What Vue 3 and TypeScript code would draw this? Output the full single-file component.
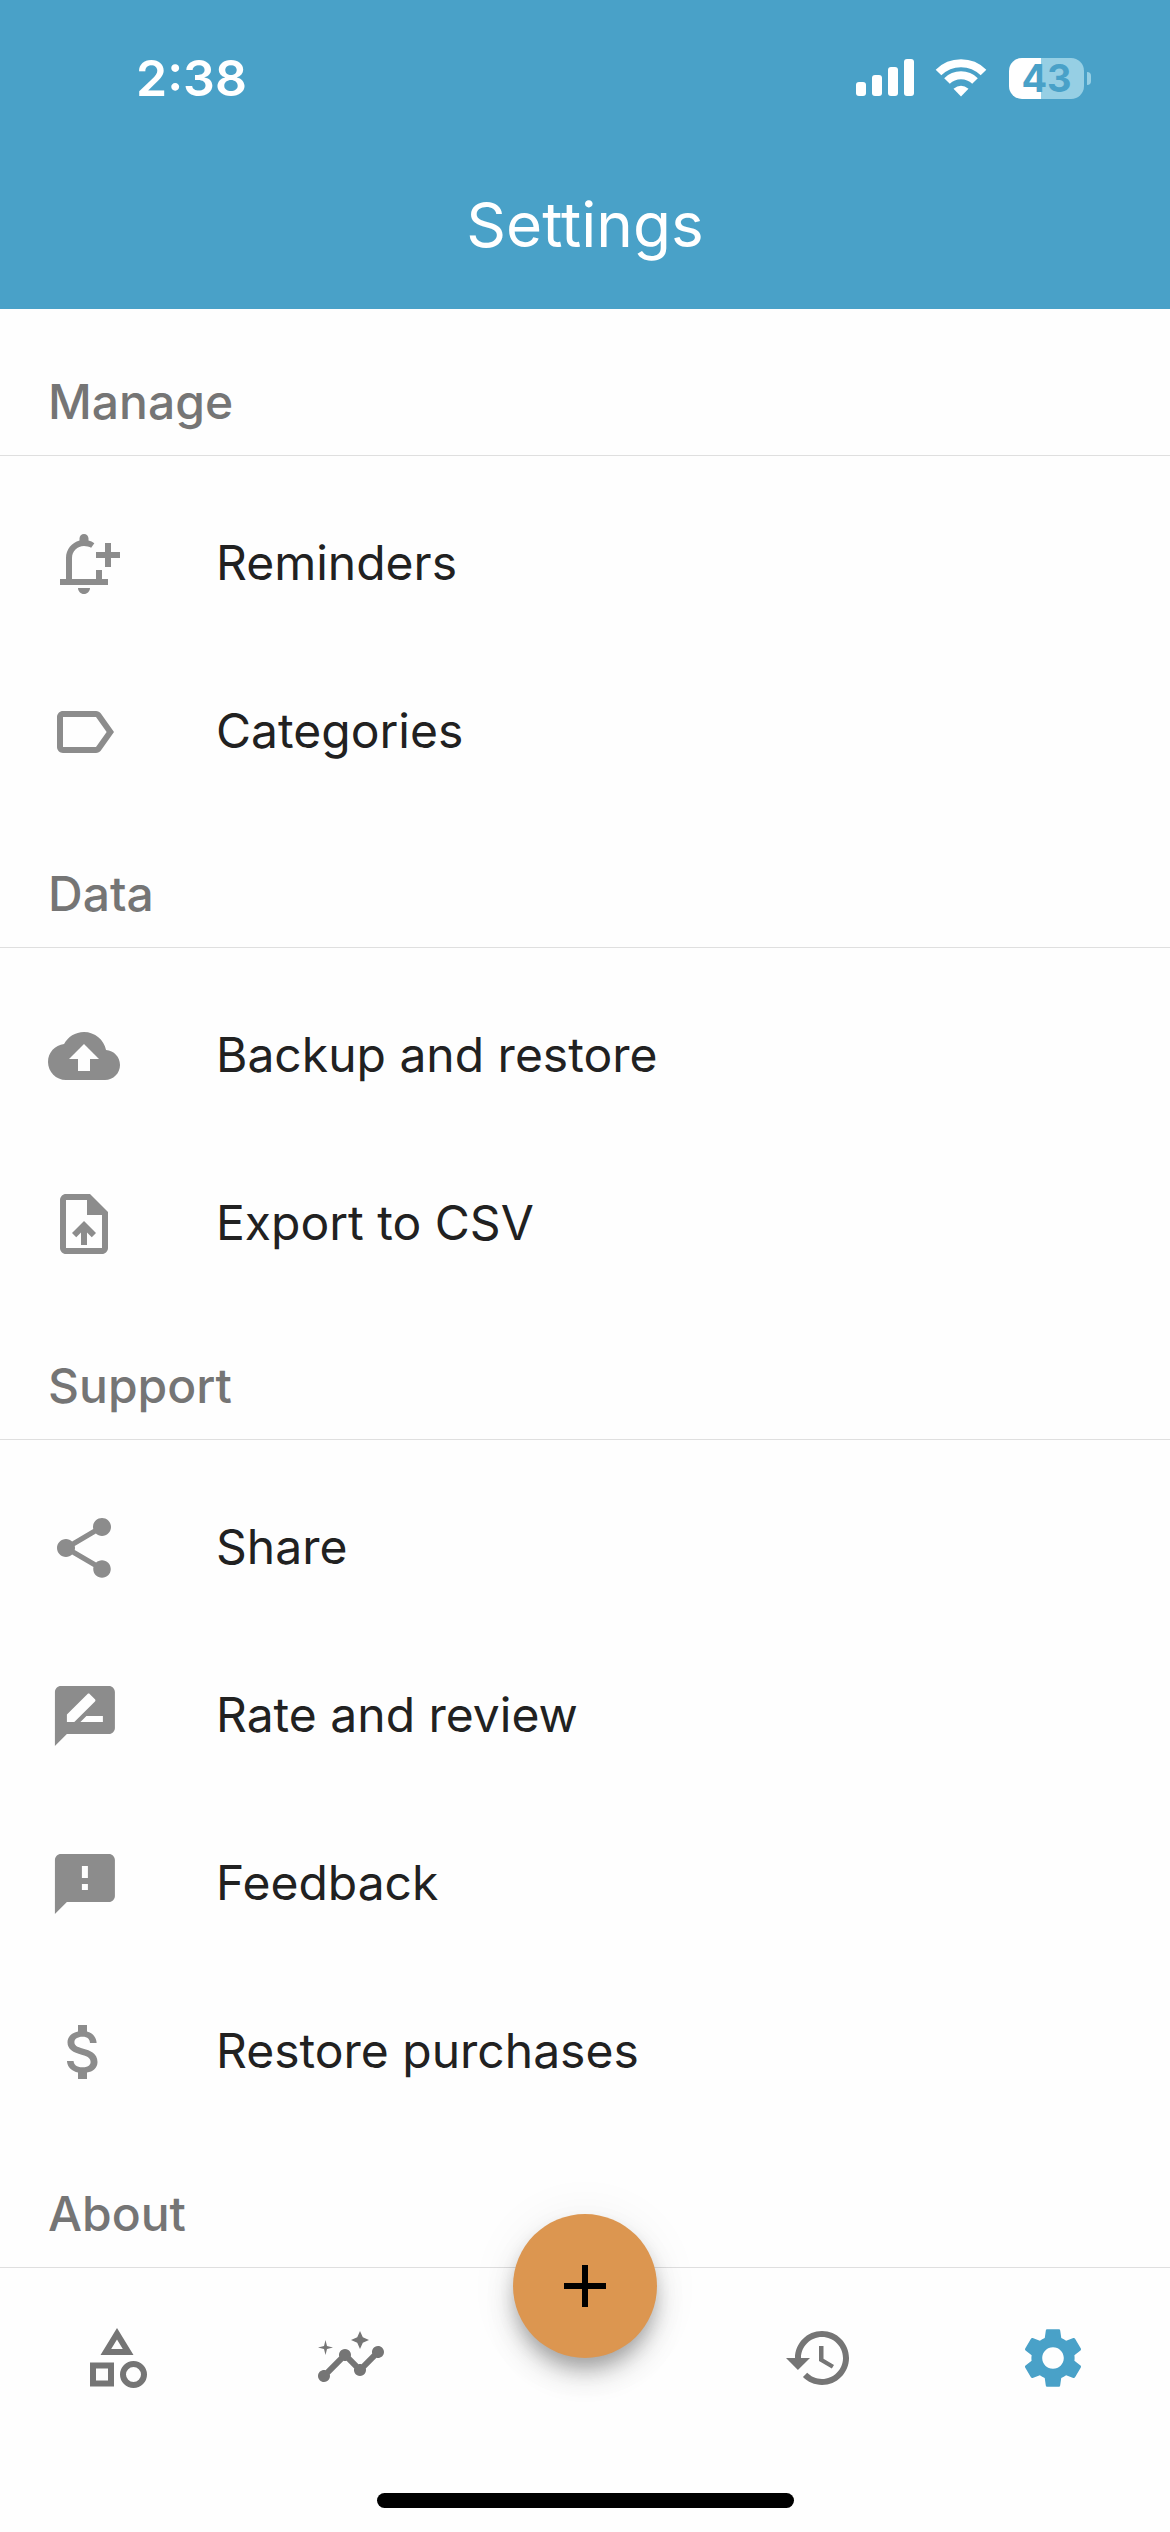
<script setup lang="ts">
interface Entry {
  label: string
  icon: string
}

interface Section {
  title: string
  entries: Entry[]
}

interface Tab {
  label: string
  href: string
  icon: string
  active?: boolean
}

const sections: Section[] = [
  {
    title: 'Manage',
    entries: [
      {
        label: 'Reminders',
        icon: 'M10 20h4c0 1.1-.9 2-2 2s-2-.9-2-2zM4 17h2v-7c0-2.79 1.91-5.14 4.5-5.8v-.7C10.5 2.67 11.17 2 12 2s1.5.67 1.5 1.5v.7c.71.18 1.36.49 1.95.9l-1.06 1.51C13.72 6.23 12.87 6 12 6c-2.21 0-4 1.79-4 4v7h8v-3h2v3h2v2H4zM24 8h-3V5h-2v3h-3v2h3v3h2v-3h3z',
      },
      {
        label: 'Categories',
        icon: 'M17.63 5.84C17.27 5.33 16.67 5 16 5L5 5.01C3.9 5.01 3 5.9 3 7v10c0 1.1.9 1.99 2 1.99L16 19c.67 0 1.27-.33 1.63-.84L22 12l-4.37-6.16zM16 17H5V7h11l3.55 5L16 17z',
      },
    ],
  },
  {
    title: 'Data',
    entries: [
      {
        label: 'Backup and restore',
        icon: 'M19.35 10.04C18.67 6.59 15.64 4 12 4 9.11 4 6.6 5.64 5.35 8.04 2.34 8.36 0 10.91 0 14c0 3.31 2.69 6 6 6h13c2.76 0 5-2.24 5-5 0-2.64-2.05-4.78-4.65-4.96zM14 13v4h-4v-4H7l5-5 5 5h-3z',
      },
      {
        label: 'Export to CSV',
        icon: 'M14 2H6c-1.1 0-1.99.9-1.99 2L4 20c0 1.1.89 2 1.99 2H18c1.1 0 2-.9 2-2V8l-6-6zm4 18H6V4h7v5h5v11zM8 15.01l1.41 1.41L11 14.84V19h2v-4.16l1.59 1.59L16 15.01 12.01 11z',
      },
    ],
  },
  {
    title: 'Support',
    entries: [
      {
        label: 'Share',
        icon: 'M18 16.08c-.76 0-1.44.3-1.96.77L8.91 12.7c.05-.23.09-.46.09-.7s-.04-.47-.09-.7l7.05-4.11c.54.5 1.25.81 2.04.81 1.66 0 3-1.34 3-3s-1.34-3-3-3-3 1.34-3 3c0 .24.04.47.09.7L8.04 9.81C7.5 9.31 6.79 9 6 9c-1.66 0-3 1.34-3 3s1.34 3 3 3c.79 0 1.5-.31 2.04-.81l7.12 4.16c-.05.21-.08.43-.08.65 0 1.61 1.31 2.92 2.92 2.92s2.92-1.31 2.92-2.92-1.31-2.92-2.92-2.92z',
      },
      {
        label: 'Rate and review',
        icon: 'M20.3 2h-16c-1.1 0-1.99.9-1.99 2l-.01 18 4-4h14c1.1 0 2-.9 2-2V4c0-1.1-.9-2-2-2zm-14 12v-2.47l6.88-6.88c.2-.2.51-.2.71 0l1.77 1.77c.2.2.2.51 0 .71L8.77 14H6.3zm12 0h-7.5l2-2h5.5v2z',
      },
      {
        label: 'Feedback',
        icon: 'M20.3 2h-16c-1.1 0-1.99.9-1.99 2l-.01 18 4-4h14c1.1 0 2-.9 2-2V4c0-1.1-.9-2-2-2zm-7 12h-2v-2h2v2zm0-4h-2V6h2v4z',
      },
      {
        label: 'Restore purchases',
        icon: 'M11.8 10.9c-2.27-.59-3-1.2-3-2.15 0-1.09 1.01-1.85 2.7-1.85 1.78 0 2.44.85 2.5 2.1h2.21c-.07-1.72-1.12-3.3-3.21-3.81V3h-3v2.16c-1.94.42-3.5 1.68-3.5 3.61 0 2.31 1.91 3.46 4.7 4.13 2.5.6 3 1.48 3 2.41 0 .69-.49 1.79-2.7 1.79-2.06 0-2.87-.92-2.98-2.1h-2.2c.12 2.19 1.76 3.42 3.68 3.83V21h3v-2.15c1.95-.37 3.5-1.5 3.5-3.55 0-2.84-2.43-3.81-4.7-4.4z',
      },
    ],
  },
  { title: 'About', entries: [] },
]

const leftTabs: Tab[] = [
  {
    label: 'Activities',
    href: '#activities',
    icon: 'M12 2l-5.5 9h11L12 2zm0 3.84L13.93 9h-3.87L12 5.84zM17.5 13a4.5 4.5 0 1 0 0 9 4.5 4.5 0 0 0 0-9zm0 7a2.5 2.5 0 1 1 0-5 2.5 2.5 0 0 1 0 5zM3 21.5h8v-8H3v8zm2-6h4v4H5v-4z',
  },
  {
    label: 'Insights',
    href: '#insights',
    icon: 'M21 8c-1.45 0-2.26 1.44-1.93 2.51l-3.55 3.56c-.3-.09-.74-.09-1.04 0l-2.55-2.55C12.27 10.45 11.46 9 10 9c-1.45 0-2.27 1.44-1.93 2.52l-4.56 4.55C2.44 15.74 1 16.55 1 18c0 1.1.9 2 2 2 1.45 0 2.26-1.44 1.93-2.51l4.55-4.56c.3.09.74.09 1.04 0l2.55 2.55C12.73 16.55 13.54 18 15 18c1.45 0 2.27-1.44 1.93-2.52l3.56-3.55c1.07.33 2.51-.48 2.51-1.93 0-1.1-.9-2-2-2zM15 9l.94-2.07L18 6l-2.06-.93L15 3l-.92 2.07L12 6l2.08.93L15 9zM3.5 11L4 9l2-.5L4 8l-.5-2L3 8l-2 .5L3 9l.5 2z',
  },
]

const rightTabs: Tab[] = [
  {
    label: 'History',
    href: '#history',
    icon: 'M13 3c-4.97 0-9 4.03-9 9H1l3.89 3.89.07.14L9 12H6c0-3.87 3.13-7 7-7s7 3.13 7 7-3.13 7-7 7c-1.93 0-3.68-.79-4.94-2.06l-1.42 1.42C8.27 19.99 10.51 21 13 21c4.97 0 9-4.03 9-9s-4.03-9-9-9zm-1 5v5l4.28 2.54.72-1.21-3.5-2.08V8H12z',
  },
  {
    label: 'Settings',
    href: '#settings',
    active: true,
    icon: 'M19.14 12.94c.04-.3.06-.61.06-.94 0-.32-.02-.64-.07-.94l2.03-1.58c.18-.14.23-.41.12-.61l-1.92-3.32c-.12-.22-.37-.29-.59-.22l-2.39.96c-.5-.38-1.03-.7-1.62-.94l-.36-2.54c-.04-.24-.24-.41-.48-.41h-3.84c-.24 0-.43.17-.47.41l-.36 2.54c-.59.24-1.13.57-1.62.94l-2.39-.96c-.22-.08-.47 0-.59.22L2.74 8.87c-.12.21-.08.47.12.61l2.03 1.58c-.05.3-.09.63-.09.94s.02.64.07.94l-2.03 1.58c-.18.14-.23.41-.12.61l1.92 3.32c.12.22.37.29.59.22l2.39-.96c.5.38 1.03.7 1.62.94l.36 2.54c.05.24.24.41.48.41h3.84c.24 0 .44-.17.47-.41l.36-2.54c.59-.24 1.13-.56 1.62-.94l2.39.96c.22.08.47 0 .59-.22l1.92-3.32c.12-.22.07-.47-.12-.61l-2.01-1.58zM12 15.6c-1.98 0-3.6-1.62-3.6-3.6s1.62-3.6 3.6-3.6 3.6 1.62 3.6 3.6-1.62 3.6-3.6 3.6z',
  },
]
</script>

<template>
  <div class="screen">
    <header class="top">
      <div class="status">
        <time class="clock">2:38</time>
        <div class="indicators">
          <svg class="signal" viewBox="0 0 58 38" aria-hidden="true">
            <rect x="0" y="23" width="10" height="14" rx="3" />
            <rect x="16" y="16" width="10" height="21" rx="3" />
            <rect x="32" y="8" width="10" height="29" rx="3" />
            <rect x="48" y="0" width="10" height="37" rx="3" />
          </svg>
          <svg class="wifi" viewBox="0 0 52 38" aria-hidden="true">
            <path d="M3.5 13.5a32 32 0 0 1 45 0" />
            <path d="M12 22a20 20 0 0 1 28 0" />
            <path class="dot" d="M26 37.5l-7.5-7.7q7.5-6 15 0z" />
          </svg>
          <div class="battery">
            <span class="cell">43</span>
            <span class="tip"></span>
          </div>
        </div>
      </div>
      <h1 class="title">Settings</h1>
    </header>

    <main class="content">
      <section v-for="section in sections" :key="section.title">
        <h2 class="heading">{{ section.title }}</h2>
        <ul v-if="section.entries.length" class="list">
          <li v-for="entry in section.entries" :key="entry.label">
            <button type="button" class="row">
              <svg class="icon" viewBox="0 0 24 24" aria-hidden="true">
                <path :d="entry.icon" />
              </svg>
              <span class="label">{{ entry.label }}</span>
            </button>
          </li>
        </ul>
      </section>
    </main>

    <nav class="bottom">
      <div class="tabs">
        <a v-for="tab in leftTabs" :key="tab.label" class="tab" :href="tab.href" :aria-label="tab.label">
          <svg class="icon" viewBox="0 0 24 24" aria-hidden="true"><path :d="tab.icon" /></svg>
        </a>
        <div class="slot">
          <button type="button" class="fab" aria-label="Add">
            <svg class="icon" viewBox="0 0 24 24" aria-hidden="true">
              <path d="M19 13h-6v6h-2v-6H5v-2h6V5h2v6h6v2z" />
            </svg>
          </button>
        </div>
        <a
          v-for="tab in rightTabs"
          :key="tab.label"
          class="tab"
          :class="{ active: tab.active }"
          :href="tab.href"
          :aria-label="tab.label"
          :aria-current="tab.active ? 'page' : undefined"
        >
          <svg class="icon" viewBox="0 0 24 24" aria-hidden="true"><path :d="tab.icon" /></svg>
        </a>
      </div>
      <div class="home-bar"></div>
    </nav>
  </div>
</template>

<style>
body {
  margin: 0;
  background: #fefefe;
}
</style>

<style scoped>
.screen {
  --blue: #49a1c8;
  --line: #dfdfdf;
  --muted: #757575;
  display: flex;
  flex-direction: column;
  height: 100vh;
  background: #fefefe;
  color: #212121;
  font-family: Inter, 'Liberation Sans', sans-serif;
}

.top {
  flex: none;
  background: var(--blue);
  color: #fff;
}

.status {
  box-sizing: border-box;
  display: flex;
  align-items: center;
  justify-content: space-between;
  height: 141px;
  padding: 15px 79px 0 136px;
}

.clock {
  font-size: 50px;
  font-weight: 600;
  line-height: 60px;
}

.indicators {
  display: flex;
  align-items: center;
}

.signal {
  width: 58px;
  height: 38px;
  margin-right: 21px;
  fill: #fff;
}

.wifi {
  width: 52px;
  height: 38px;
  margin-right: 22px;
  fill: none;
  stroke: #fff;
  stroke-width: 8;
}

.wifi .dot {
  fill: #fff;
  stroke: none;
}

.battery {
  display: flex;
  align-items: center;
  gap: 3px;
}

.cell {
  width: 75px;
  height: 41px;
  border-radius: 13px;
  background: linear-gradient(to right, #fff 43%, #96cfe4 43%);
  color: var(--blue);
  font-size: 38px;
  font-weight: 700;
  line-height: 41px;
  text-align: center;
}

.tip {
  width: 4px;
  height: 13px;
  border-radius: 0 6px 6px 0;
  background: #96cfe4;
}

.title {
  margin: 0;
  font-size: 62px;
  font-weight: 400;
  line-height: 168px;
  text-align: center;
}

.content {
  flex: 1;
  min-height: 0;
  overflow: hidden;
  padding-top: 15px;
}

.heading {
  box-sizing: border-box;
  height: 132px;
  margin: 0;
  padding: 48px 48px 0;
  border-bottom: 1px solid var(--line);
  color: var(--muted);
  font-size: 48px;
  font-weight: 500;
  line-height: 60px;
}

.list {
  margin: 0;
  padding: 24px 0 0;
  list-style: none;
}

.row {
  display: flex;
  align-items: center;
  gap: 96px;
  width: 100%;
  height: 168px;
  padding: 0 48px;
  border: 0;
  background: none;
  color: inherit;
  font: inherit;
  font-size: 48px;
  line-height: 60px;
  text-align: left;
}

.label {
  padding-bottom: 2px;
}

.icon {
  display: block;
  flex: none;
  width: 72px;
  height: 72px;
  fill: currentColor;
}

.row .icon {
  color: #8c8c8c;
}

.bottom {
  position: relative;
  flex: none;
  display: flex;
  flex-direction: column;
  align-items: center;
  gap: 45px;
  margin-top: -1px;
  padding-bottom: 24px;
  border-top: 1px solid var(--line);
  background: #fefefe;
}

.tabs {
  display: flex;
  width: 100%;
  height: 180px;
}

.tab,
.slot {
  display: flex;
  flex: 1;
  align-items: center;
  justify-content: center;
  color: var(--muted);
}

.tab.active {
  color: var(--blue);
}

.fab {
  position: absolute;
  top: -54px;
  display: flex;
  align-items: center;
  justify-content: center;
  width: 144px;
  height: 144px;
  padding: 0;
  border: 0;
  border-radius: 50%;
  background: #dc9650;
  color: #000;
  box-shadow:
    0 12px 18px -3px rgb(0 0 0 / 24%),
    0 18px 30px rgb(0 0 0 / 14%),
    0 3px 54px rgb(0 0 0 / 6%);
}

.home-bar {
  width: 417px;
  height: 15px;
  border-radius: 8px;
  background: #000;
}
</style>
